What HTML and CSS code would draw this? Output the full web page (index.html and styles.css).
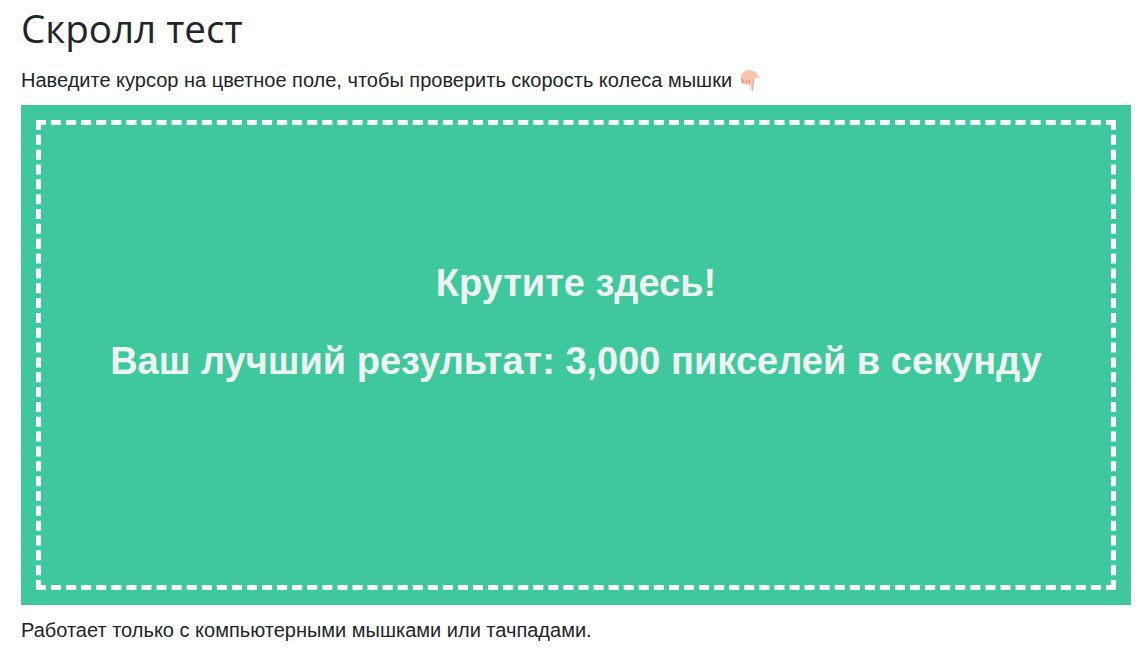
FILE: index.html
```html
<!DOCTYPE html>
<html lang="ru">
<head>
<meta charset="UTF-8" />
<meta name="viewport" content="width=device-width, initial-scale=1" />
<title>Скролл тест</title>
<link rel="stylesheet" href="styles.css">
</head>
<body>

<h1>Скролл тест</h1>

<p class="lead">
  Наведите курсор на цветное поле, чтобы проверить скорость колеса мышки
  <svg class="hand" viewBox="0 0 20 22" aria-hidden="true">
    <path fill="#f7c4ae" d="M1 8C1 3 5 0 9 0c3 0 5 1 7 3l3 3c1 1 0 2-1 2h-3l-1 2-1 10c0 1-2 1-2 0l-1-6-2 1-2-1-2 0C2 14 1 11 1 8z"/>
    <path fill="#e98f8a" d="M1 8c0 3 1 5 2 6l1-3-2-2zM6 10l0 4 1 0 0-4zM9 10l0 4 1 0 0-4z"/>
    <path fill="#eda692" d="M13 9l1 1-1 11c-1 0-1 0-1-1z"/>
  </svg>
</p>

<div class="scroll-box">
  <h2>Крутите здесь!</h2>
  <h2>Ваш лучший результат: 3,000 пикселей в секунду</h2>
</div>

<p class="note">Работает только с компьютерными мышками или тачпадами.</p>

</body>
</html>
```

FILE: styles.css
```css
body {
  margin: 0;
  padding: 0 8px 0 21px;
  color: #212529;
  background: #fff;
  font-family: "Liberation Sans", Arial, sans-serif;
  font-size: 20px;
  line-height: 30px;
}
h1 {
  margin: 0;
  padding-top: 4px;
  font-family: "Open Sans", sans-serif;
  font-size: 38.6px;
  font-weight: 400;
  line-height: 48px;
}
.lead {
  margin: 13px 0 0;
}
.hand {
  width: 20px;
  height: 22px;
  margin-left: 2px;
  vertical-align: -5px;
}
.scroll-box {
  height: 500px;
  margin-top: 10px;
  display: flex;
  flex-direction: column;
  align-items: center;
  justify-content: center;
  gap: 32px;
  padding-bottom: 66px;
  box-sizing: border-box;
  background: #3fc89e;
  color: #eef3f1;
  outline: 5px dashed #fff;
  outline-offset: -20px;
}
.scroll-box h2 {
  margin: 0;
  font-size: 38px;
  font-weight: 700;
  line-height: 46px;
}
.note {
  margin: 10px 0 0;
}
```
